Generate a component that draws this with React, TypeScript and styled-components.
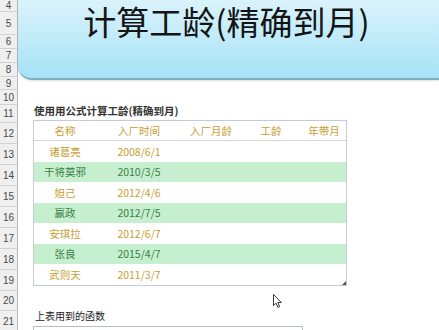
import styled, { createGlobalStyle } from "styled-components";

const GlobalStyle = createGlobalStyle`
  html, body {
    margin: 0;
    padding: 0;
    background: #fff;
    overflow: hidden;
  }
  body {
    font-family: "Noto Sans CJK SC", "Noto Sans", sans-serif;
  }
`;

type Tone = "head" | "plain" | "green";

interface Person {
  name: string;
  joined: string;
}

const people: Person[] = [
  { name: "诸葛亮", joined: "2008/6/1" },
  { name: "干将莫邪", joined: "2010/3/5" },
  { name: "妲己", joined: "2012/4/6" },
  { name: "嬴政", joined: "2012/7/5" },
  { name: "安琪拉", joined: "2012/6/7" },
  { name: "张良", joined: "2015/4/7" },
  { name: "武则天", joined: "2011/3/7" },
];

// sheet rows 4..21 and their pixel heights
const rowHeights = [12, 23, 14, 14, 14, 13, 15, 18, 21, 21, 21, 21, 21, 21, 21, 21, 20, 21];

const Sheet = styled.div`
  display: grid;
  grid-template-columns: 18px 1fr;
  width: 439px;
  height: 330px;
  overflow: hidden;
`;

const RowHeaders = styled.div`
  display: flex;
  flex-direction: column;
  background: #efefef;
  border-right: 1px solid #b9b9b9;
`;

const RowLabel = styled.div<{ $h: number }>`
  flex: none;
  height: ${(p) => p.$h}px;
  box-sizing: border-box;
  border-bottom: 1px solid #d2d2d2;
  display: flex;
  align-items: center;
  justify-content: center;
  font: 10px "Liberation Sans", sans-serif;
  color: #4a4a4a;
`;

const Canvas = styled.div`
  position: relative;
  display: flex;
  flex-direction: column;
  min-width: 0;
`;

const Banner = styled.div`
  flex: none;
  height: 78px;
  border-bottom: 2px solid #80b0c0;
  border-bottom-left-radius: 14px;
  background: linear-gradient(#daf3fc, #a5e2f6);
  box-shadow: 0 1px 2px rgba(0, 0, 0, 0.12);
  display: flex;
  justify-content: center;
  align-items: flex-start;
`;

const Title = styled.h1`
  margin: 1px 4px 0 0;
  font-size: 33px;
  line-height: 40px;
  font-weight: 400;
  color: #141414;
  white-space: nowrap;
`;

const Caption = styled.div`
  margin: 24px 0 0 16px;
  font-size: 10.5px;
  line-height: 14px;
  font-weight: 700;
  color: #333;
`;

const Table = styled.div`
  position: relative;
  margin: 2px 0 0 15px;
  width: 314px;
  box-sizing: border-box;
  border: 1px solid #c6cbd1;
`;

const Row = styled.div<{ $tone: Tone }>`
  display: grid;
  grid-template-columns: 62px 86px 58px 62px 44px;
  align-items: center;
  height: ${(p) => (p.$tone === "head" ? "19px" : "20.5px")};
  border-bottom: ${(p) => (p.$tone === "head" ? "1px solid #d3d7dc" : "none")};
  background: ${(p) => (p.$tone === "green" ? "#c6efcf" : "#fff")};
  color: ${(p) => (p.$tone === "green" ? "#3b7f45" : "#c99d33")};
  font-size: 10.5px;
`;

const Cell = styled.div`
  text-align: center;
  white-space: nowrap;
`;

const Grip = styled.div`
  position: absolute;
  right: 0;
  bottom: 0;
  width: 0;
  height: 0;
  border-left: 4px solid transparent;
  border-bottom: 4px solid #555;
`;

const Note = styled.div`
  margin: 23px 0 0 17px;
  font-size: 10px;
  line-height: 14px;
  color: #222;
`;

const FuncBox = styled.div`
  margin: 3px 0 0 15px;
  width: 270px;
  height: 20px;
  box-sizing: border-box;
  border: 1px solid #b7bdc4;
  border-bottom: none;
`;

const Pointer = styled.svg`
  position: absolute;
  left: 255px;
  top: 294px;
`;

const App = () => {
  return (
    <>
      <GlobalStyle />
      <Sheet>
        <RowHeaders>
          {rowHeights.map((h, i) => (
            <RowLabel key={i} $h={h}>
              {i + 4}
            </RowLabel>
          ))}
        </RowHeaders>
        <Canvas>
          <Banner>
            <Title>计算工龄(精确到月)</Title>
          </Banner>
          <Caption>使用用公式计算工龄(精确到月)</Caption>
          <Table>
            <Row $tone="head">
              <Cell>名称</Cell>
              <Cell>入厂时间</Cell>
              <Cell>入厂月龄</Cell>
              <Cell>工龄</Cell>
              <Cell>年带月</Cell>
            </Row>
            {people.map((p, i) => (
              <Row key={p.name} $tone={i % 2 === 1 ? "green" : "plain"}>
                <Cell>{p.name}</Cell>
                <Cell>{p.joined}</Cell>
                <Cell />
                <Cell />
                <Cell />
              </Row>
            ))}
            <Grip />
          </Table>
          <Note>上表用到的函数</Note>
          <FuncBox />
          <Pointer width="10" height="15" viewBox="0 0 10 15">
            <path
              d="M0.5 0.5 L0.5 11.5 L3.1 9.1 L4.9 13.4 L6.6 12.7 L4.9 8.5 L8.3 8.5 Z"
              fill="#fff"
              stroke="#222"
              strokeWidth="0.9"
              strokeLinejoin="round"
            />
          </Pointer>
        </Canvas>
      </Sheet>
    </>
  );
};

export default App;
